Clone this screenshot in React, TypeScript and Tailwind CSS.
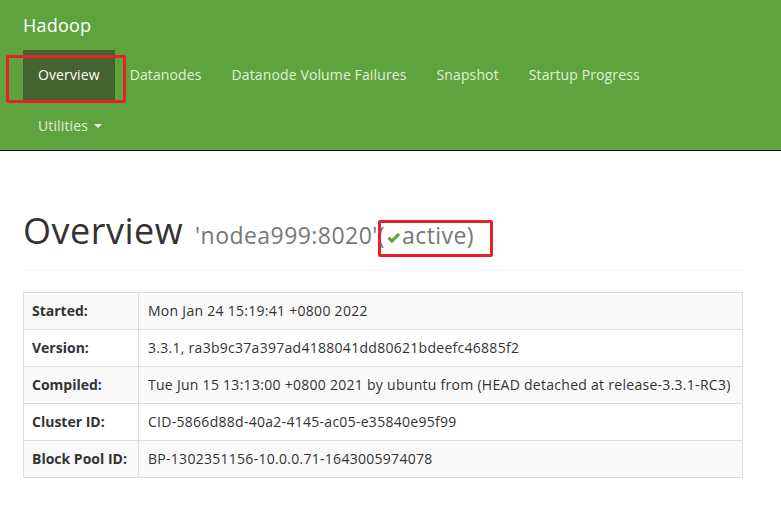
import React from "react";

const navLinks = [
  { name: "Overview", active: true },
  { name: "Datanodes" },
  { name: "Datanode Volume Failures" },
  { name: "Snapshot" },
  { name: "Startup Progress" },
];

const rows = [
  { label: "Started:", value: "Mon Jan 24 15:19:41 +0800 2022" },
  { label: "Version:", value: "3.3.1, ra3b9c37a397ad4188041dd80621bdeefc46885f2" },
  {
    label: "Compiled:",
    value: "Tue Jun 15 13:13:00 +0800 2021 by ubuntu from (HEAD detached at release-3.3.1-RC3)",
  },
  { label: "Cluster ID:", value: "CID-5866d88d-40a2-4145-ac05-e35840e95f99" },
  { label: "Block Pool ID:", value: "BP-1302351156-10.0.0.71-1643005974078" },
];

function CheckIcon() {
  return (
    <svg width="15" height="12" viewBox="0 0 13 11" className="inline-block mx-[1px]">
      <path d="M0.8 6.2 L3 4.2 L5 6.4 L10.6 0.8 L12.6 2.8 L5 10.4 Z" fill="#5fa33e" />
    </svg>
  );
}

export default function App() {
  return (
    <div className="relative min-h-[507px] bg-white font-['Open_Sans',sans-serif] text-[14px] text-[#333]">
      <header className="bg-[#5fa33e] border-b border-[#080808]">
        <div className="px-[23px]">
          <div className="h-[50px] flex items-center text-[18px] text-white tracking-[0.2px]">Hadoop</div>
          <ul className="flex flex-wrap w-[700px] tracking-[0.12px]">
            {navLinks.map((l) => (
              <li key={l.name}>
                <a
                  className={`block h-[50px] px-[15px] leading-[50px] ${
                    l.active ? "bg-[#44632f] text-white" : "text-[#e2eedc]"
                  }`}
                >
                  {l.name}
                </a>
              </li>
            ))}
            <li>
              <a className="flex items-center h-[50px] px-[15px] text-[#e2eedc]">
                Utilities
                <span className="ml-[6px] mt-[2px] w-0 h-0 border-x-[4px] border-x-transparent border-t-[4px] border-t-[#e2eedc]" />
              </a>
            </li>
          </ul>
        </div>
      </header>

      <main className="mx-[23px] w-[720px] pt-[60px]">
        <div className="border-b border-[#eee] pb-[9px]">
          <h1 className="h-[50px] flex items-baseline text-[36px] leading-[40px] whitespace-nowrap tracking-[0.5px]">
            Overview
            <small className="ml-[12px] text-[23px] text-[#777] tracking-[0.45px]">
              'nodea999:8020'(<CheckIcon />active)
            </small>
          </h1>
        </div>

        <table className="mt-[21px] w-full border-collapse border border-[#ddd]">
          <tbody>
            {rows.map((r, i) => (
              <tr key={r.label} className={i % 2 === 0 ? "bg-[#f9f9f9]" : "bg-white"}>
                <th className="border border-[#ddd] px-[8px] py-[8px] text-left font-bold leading-[20px] whitespace-nowrap w-[115px]">
                  {r.label}
                </th>
                <td className="border border-[#ddd] px-[9px] py-[8px] leading-[20px] whitespace-nowrap tracking-[0.28px]">
                  {r.value}
                </td>
              </tr>
            ))}
          </tbody>
        </table>
      </main>

      {/* red annotation boxes */}
      <div className="absolute left-[6px] top-[55px] w-[120px] h-[48px] border-[3px] border-[#e8202a] rounded-[2px]" />
      <div className="absolute left-[378px] top-[220px] w-[115px] h-[37px] border-[3px] border-[#e8202a] rounded-[2px]" />
    </div>
  );
}
